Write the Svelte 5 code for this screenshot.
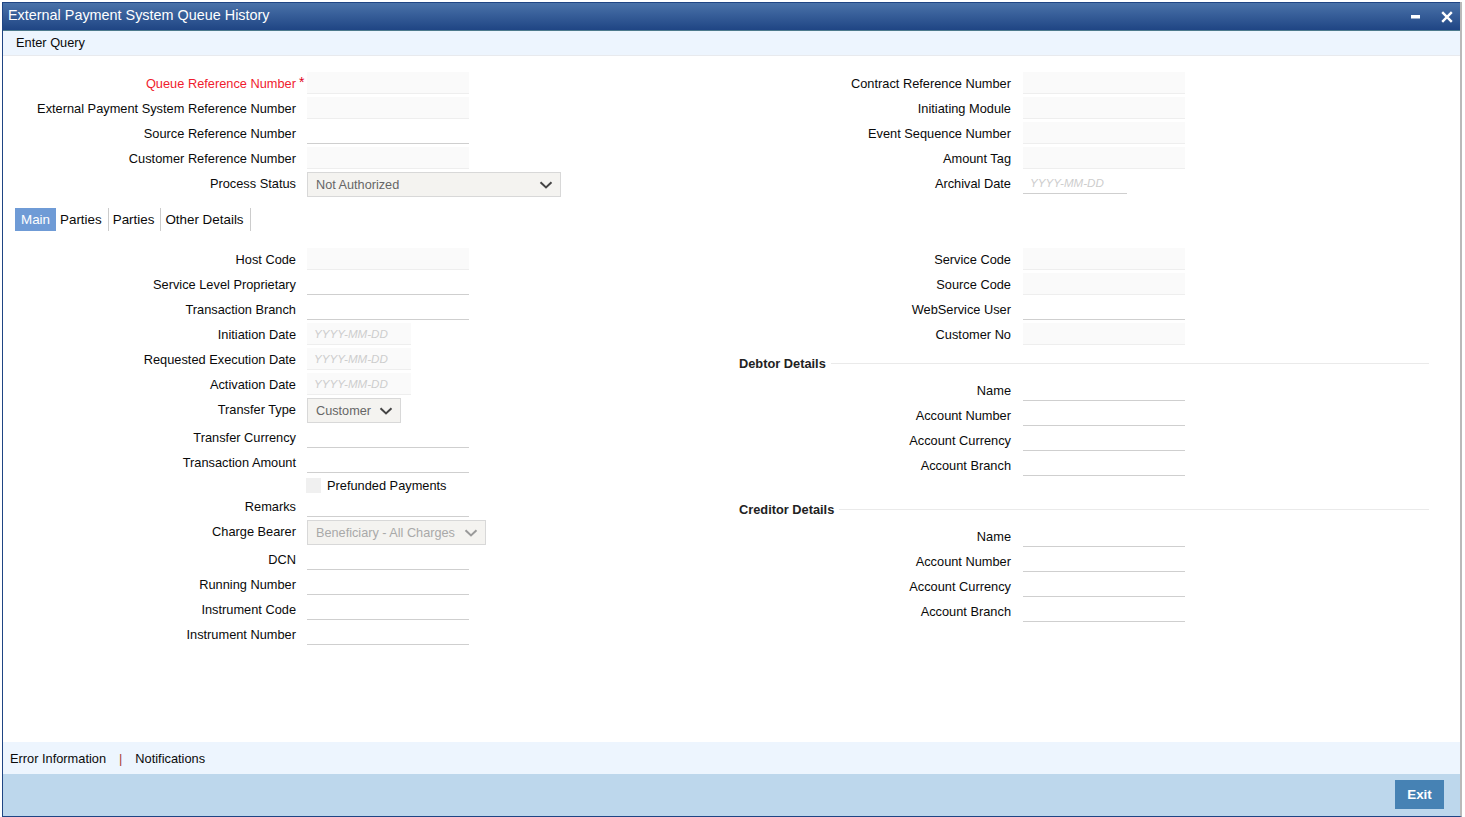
<script>
  const topLeft = [
    { label: 'Queue Reference Number', kind: 'ro', req: true },
    { label: 'External Payment System Reference Number', kind: 'ro' },
    { label: 'Source Reference Number', kind: 'edit' },
    { label: 'Customer Reference Number', kind: 'ro' },
    { label: 'Process Status', kind: 'select', value: 'Not Authorized', size: 'status' }
  ];
  const topRight = [
    { label: 'Contract Reference Number', kind: 'ro' },
    { label: 'Initiating Module', kind: 'ro' },
    { label: 'Event Sequence Number', kind: 'ro' },
    { label: 'Amount Tag', kind: 'ro' },
    { label: 'Archival Date', kind: 'date', plain: true }
  ];
  const mainLeft = [
    { label: 'Host Code', kind: 'ro' },
    { label: 'Service Level Proprietary', kind: 'edit' },
    { label: 'Transaction Branch', kind: 'edit' },
    { label: 'Initiation Date', kind: 'date' },
    { label: 'Requested Execution Date', kind: 'date' },
    { label: 'Activation Date', kind: 'date' },
    { label: 'Transfer Type', kind: 'select', value: 'Customer', size: 'type', tall: true },
    { label: 'Transfer Currency', kind: 'edit' },
    { label: 'Transaction Amount', kind: 'edit' },
    { kind: 'check', label: 'Prefunded Payments' },
    { label: 'Remarks', kind: 'edit' },
    { label: 'Charge Bearer', kind: 'select', value: 'Beneficiary - All Charges', size: 'charge', tall: true, off: true },
    { label: 'DCN', kind: 'edit' },
    { label: 'Running Number', kind: 'edit' },
    { label: 'Instrument Code', kind: 'edit' },
    { label: 'Instrument Number', kind: 'edit' }
  ];
  const mainRight = [
    { label: 'Service Code', kind: 'ro' },
    { label: 'Source Code', kind: 'ro' },
    { label: 'WebService User', kind: 'edit' },
    { label: 'Customer No', kind: 'ro' }
  ];
  const party = [
    { label: 'Name', kind: 'edit' },
    { label: 'Account Number', kind: 'edit' },
    { label: 'Account Currency', kind: 'edit' },
    { label: 'Account Branch', kind: 'edit' }
  ];
  const tabs = ['Main', 'Parties', 'Parties', 'Other Details'];
</script>

{#snippet field(f)}
  {#if f.kind === 'check'}
    <div class="row check-row">
      <span class="box"></span>
      <span class="check-label">{f.label}</span>
    </div>
  {:else}
    <div class="row" class:tall={f.tall}>
      <span class="label" class:required={f.req}>{f.label}{#if f.req}<i class="star">*</i>{/if}</span>
      {#if f.kind === 'select'}
        <span class="select {f.size}" class:off={f.off}>
          {f.value}
          <svg class="chev" width="14" height="8" viewBox="0 0 14 8" aria-hidden="true">
            <path d="M1.5 1.2 7 6.4l5.5-5.2" fill="none" stroke="currentColor" stroke-width="2" />
          </svg>
        </span>
      {:else if f.kind === 'date'}
        <input class="input date" class:plain={f.plain} placeholder="YYYY-MM-DD" readonly />
      {:else}
        <input class="input" class:ro={f.kind === 'ro'} readonly />
      {/if}
    </div>
  {/if}
{/snippet}

<div class="window">
  <header class="title">
    <span>External Payment System Queue History</span>
    <div class="controls">
      <svg width="9" height="4" viewBox="0 0 9 4" aria-hidden="true"><rect width="9" height="3.5" fill="#fff" /></svg>
      <svg width="12" height="12" viewBox="0 0 12 12" aria-hidden="true"><path d="M1.2 1.2l9.6 9.6M10.8 1.2 1.2 10.8" stroke="#fff" stroke-width="2.4" fill="none" /></svg>
    </div>
  </header>
  <div class="toolbar">Enter Query</div>

  <main class="content">
    <section class="columns top">
      <div class="col left">{#each topLeft as f}{@render field(f)}{/each}</div>
      <div class="col right">{#each topRight as f}{@render field(f)}{/each}</div>
    </section>

    <nav class="tabs">
      {#each tabs as t, i}
        <span class="tab" class:active={i === 0}>{t}</span>
      {/each}
    </nav>

    <section class="columns">
      <div class="col left">{#each mainLeft as f}{@render field(f)}{/each}</div>
      <div class="col right">
        {#each mainRight as f}{@render field(f)}{/each}
        <h3 class="legend"><span>Debtor Details</span></h3>
        {#each party as f}{@render field(f)}{/each}
        <h3 class="legend second"><span>Creditor Details</span></h3>
        {#each party as f}{@render field(f)}{/each}
      </div>
    </section>
  </main>

  <div class="links">
    <span>Error Information</span>
    <span class="sep">|</span>
    <span>Notifications</span>
  </div>
  <footer class="footer">
    <button class="exit">Exit</button>
  </footer>
</div>

<style>
  :global(body) {
    margin: 0;
    background: #fff;
  }
  .window {
    box-sizing: border-box;
    display: flex;
    flex-direction: column;
    width: 1460px;
    height: 815px;
    margin: 2px 0 0 2px;
    border-left: 1px solid #1f4584;
    border-right: 2px solid #b9b9b9;
    border-bottom: 1px solid #1f4584;
    font: 12.8px/20px "Liberation Sans", Arial, sans-serif;
    color: #0a0a0a;
    overflow: hidden;
  }
  .title {
    box-sizing: border-box;
    flex: none;
    display: flex;
    align-items: center;
    justify-content: space-between;
    height: 29px;
    padding: 0 7px 3px 5px;
    font-size: 14.4px;
    color: #fff;
    background: linear-gradient(#4a72a9, #1f4584);
    border-top: 1px solid #1f4584;
    border-bottom: 1px solid #4d7a8c;
  }
  .controls {
    display: flex;
    align-items: center;
    gap: 21px;
    padding-top: 3px;
  }
  .toolbar {
    box-sizing: border-box;
    flex: none;
    height: 25px;
    padding: 2px 0 0 13px;
    background: #edf5fe;
    border-bottom: 1px solid #e8eaee;
  }
  .content {
    flex: 1;
    min-height: 0;
    padding-top: 15px;
    background: #fff;
  }
  .columns {
    display: flex;
  }
  .col.left {
    width: 716px;
    flex: none;
  }
  .col.right {
    flex: 1;
  }
  .row {
    display: flex;
    height: 25px;
    align-items: flex-start;
  }
  .row.tall {
    height: 28px;
  }
  .label {
    position: relative;
    box-sizing: border-box;
    flex: none;
    width: 293px;
    height: 25px;
    line-height: 25px;
    text-align: right;
  }
  .col.right .label {
    width: 292px;
  }
  .required {
    color: #f01c2e;
  }
  .star {
    position: absolute;
    left: 296px;
    top: -1px;
    font-size: 14px;
    font-style: normal;
    color: #e0001a;
  }
  .input {
    box-sizing: border-box;
    display: block;
    width: 162px;
    height: 22px;
    margin: 1px 0 0 11px;
    padding: 0 7px;
    border: 0;
    border-bottom: 1px solid #cfcfcf;
    border-radius: 0;
    outline: none;
    background: #fff;
    font: italic 11.6px "Liberation Sans", Arial, sans-serif;
  }
  .col.right .input {
    margin-left: 12px;
  }
  .input.ro {
    background: #fafafa;
    border-bottom-color: #eee;
  }
  .input.date {
    width: 104px;
    background: #fafafa;
    border-bottom-color: #eee;
  }
  .input.date.plain {
    background: #fff;
    border-bottom-color: #cfcfcf;
  }
  .input::placeholder {
    color: #cdcdcd;
    opacity: 1;
  }
  .select {
    position: relative;
    box-sizing: border-box;
    display: block;
    height: 25px;
    margin: 1px 0 0 11px;
    padding-left: 8px;
    line-height: 24px;
    font-size: 12.7px;
    color: #666;
    background: #f4f3f0;
    border: 1px solid #d8d8d8;
  }
  .select.off {
    color: #a9a9a9;
  }
  .status {
    width: 254px;
  }
  .type {
    width: 94px;
  }
  .charge {
    width: 179px;
  }
  .chev {
    position: absolute;
    right: 7px;
    top: 8px;
    color: #444;
  }
  .off .chev {
    color: #9a9a9a;
  }
  .check-row {
    box-sizing: border-box;
    height: 19px;
    align-items: center;
    padding: 2px 0 0 303px;
  }
  .box {
    flex: none;
    width: 15px;
    height: 15px;
    background: #f0f0f0;
  }
  .check-label {
    margin-left: 6px;
  }
  .tabs {
    display: flex;
    height: 23px;
    margin: 12px 0 16px 12px;
    font-size: 13.4px;
  }
  .tab {
    box-sizing: border-box;
    height: 23px;
    line-height: 23px;
    padding: 0 6px 0 4px;
    border-right: 1px solid #ccc;
  }
  .tab.active {
    padding: 0 6px;
    color: #fff;
    background: #6f9bd6;
    border-right: 0;
  }
  .legend {
    display: flex;
    align-items: center;
    height: 31px;
    width: 690px;
    margin: 0 0 0 20px;
    padding-top: 2px;
    box-sizing: border-box;
    font-size: 12.8px;
    font-weight: 700;
    color: #222;
  }
  .legend.second {
    height: 46px;
    padding-top: 17px;
  }
  .legend::after {
    content: "";
    flex: 1;
    margin-left: 5px;
    border-top: 1px solid #eaeaea;
  }
  .links {
    box-sizing: border-box;
    flex: none;
    display: flex;
    align-items: center;
    gap: 13px;
    height: 32px;
    padding: 1px 0 0 7px;
    background: #edf5fe;
  }
  .sep {
    color: #a8413a;
  }
  .footer {
    flex: none;
    box-sizing: border-box;
    height: 42px;
    display: flex;
    justify-content: flex-end;
    align-items: flex-start;
    padding: 6px 16px 0 0;
    background: #bdd7ec;
  }
  .exit {
    width: 49px;
    height: 29px;
    padding: 0;
    border: 0;
    border-radius: 0;
    background: #4682b4;
    color: #fff;
    font: 700 13.4px "Liberation Sans", Arial, sans-serif;
  }
</style>
